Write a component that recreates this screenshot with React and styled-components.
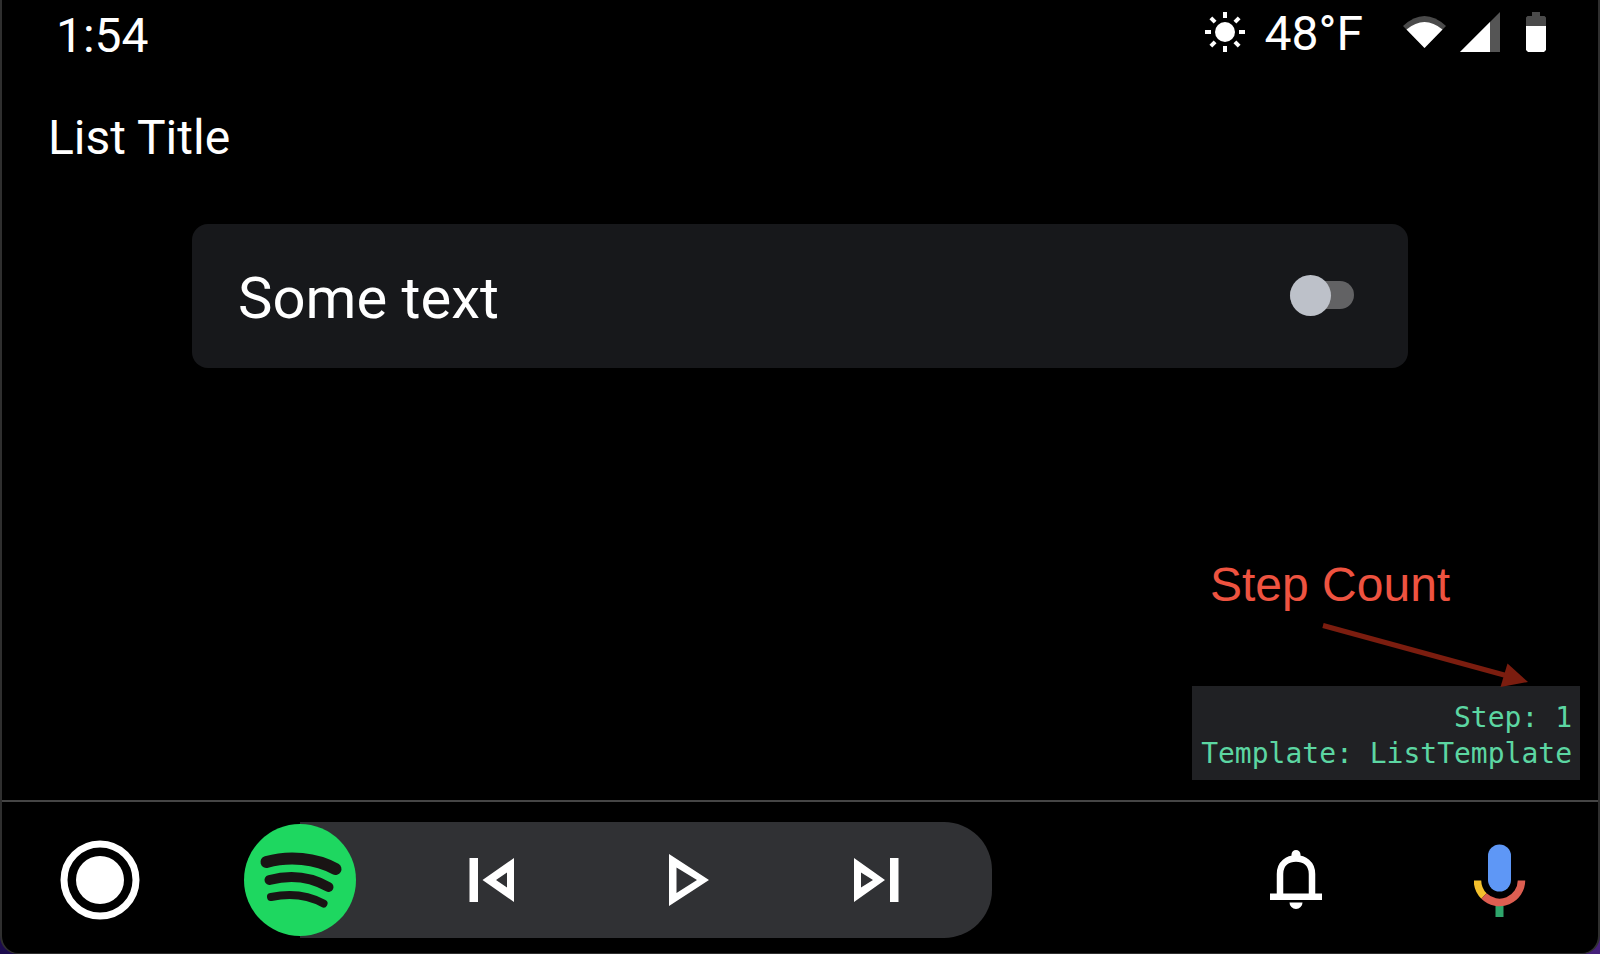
import { useState } from "react";
import styled, { createGlobalStyle } from "styled-components";

const App = () => {
    const [checked, setChecked] = useState(false);

    return (
        <>
            <GlobalStyle />
            <Screen>
                <StatusBar>
                    <Clock>1:54</Clock>
                    <StatusGroup>
                        <SunIcon />
                        <Temperature>48°F</Temperature>
                        <WifiIcon />
                        <SignalIcon />
                        <BatteryIcon />
                    </StatusGroup>
                </StatusBar>
                <Main>
                    <Title>List Title</Title>
                    <Row>
                        <RowLabel htmlFor="some-text">Some text</RowLabel>
                        <Toggle
                            id="some-text"
                            type="checkbox"
                            checked={checked}
                            onChange={(e) => setChecked(e.target.checked)}
                        />
                    </Row>
                    <Callout>
                        <CalloutText>Step Count</CalloutText>
                        <Arrow />
                        <DebugBox>
                            <DebugLine>Step: 1</DebugLine>
                            <DebugLine>Template: ListTemplate</DebugLine>
                        </DebugBox>
                    </Callout>
                </Main>
                <NavBar>
                    <IconButton aria-label="Home">
                        <svg width="80" height="80" viewBox="0 0 80 80">
                            <circle cx="40" cy="40" r="36" fill="none" stroke="#fff" strokeWidth="7" />
                            <circle cx="40" cy="40" r="24" fill="#fff" />
                        </svg>
                    </IconButton>
                    <Player>
                        <IconButton aria-label="Spotify">
                            <SpotifyLogo />
                        </IconButton>
                        <Controls>
                            <IconButton aria-label="Previous">
                                <ControlSvg viewBox="0 0 64 64">
                                    <path d="M9.500 10H18V54H9.500Z" />
                                    <path fillRule="evenodd" d="M54 10V54L22.500 32ZM47 24.500L36 32L47 39.500Z" />
                                </ControlSvg>
                            </IconButton>
                            <IconButton aria-label="Play">
                                <ControlSvg viewBox="0 0 64 64">
                                    <path fillRule="evenodd" d="M16 6V58L56 32ZM23.500 19.500L44 32L23.500 45Z" />
                                </ControlSvg>
                            </IconButton>
                            <IconButton aria-label="Next">
                                <ControlSvg viewBox="0 0 64 64">
                                    <path fillRule="evenodd" d="M9 10V54L40 32ZM16 24.500L28 32L16 39.500Z" />
                                    <path d="M45 10H53.500V54H45Z" />
                                </ControlSvg>
                            </IconButton>
                        </Controls>
                    </Player>
                    <Actions>
                        <IconButton aria-label="Notifications">
                            <BellIcon />
                        </IconButton>
                        <IconButton aria-label="Voice search">
                            <MicIcon />
                        </IconButton>
                    </Actions>
                </NavBar>
            </Screen>
        </>
    );
}

export default App;


const SunIcon = () => (
    <StatusSvg width="40" height="40" viewBox="0 0 40 40">
        <circle cx="20" cy="20" r="10" />
        {[0, 45, 90, 135, 180, 225, 270, 315].map((angle) => (
            <rect key={angle} x="18" y="0" width="4" height="6" transform={`rotate(${angle} 20 20)`} />
        ))}
    </StatusSvg>
)

const WifiIcon = () => (
    <WifiSvg width="43" height="40" viewBox="0 0 43 40">
        <path fill="#4a4a4a" d="M21.5 36L0 14Q21.500 -6 43 14Z" />
        <path d="M21.5 36L3.500 17.500Q21.500 2.500 39.500 17.500Z" />
    </WifiSvg>
)

const SignalIcon = () => (
    <SignalSvg width="40" height="40" viewBox="0 0 40 40">
        <path fill="#555" d="M0 40L40 0V40Z" />
        <path d="M0 40L30 10V40Z" />
    </SignalSvg>
)

const BatteryIcon = () => (
    <BatterySvg width="20" height="40" viewBox="0 0 20 40">
        <path fill="#4a4a4a" d="M6 0H14V4H18.500L20 5.500V14H0V5.500L1.500 4H6Z" />
        <path d="M0 14H20V38L18 40H2L0 38Z" />
    </BatterySvg>
)

const Arrow = () => (
    <ArrowSvg width="388" height="73" viewBox="0 0 388 73">
        <path d="M131 12.500L314 62.500" stroke="#7b1d0f" strokeWidth="5" />
        <path d="M315.500 50.500L336 69L308.500 74Z" fill="#7b1d0f" />
    </ArrowSvg>
)

const SpotifyLogo = () => (
    <svg width="112" height="112" viewBox="0 0 112 112">
        <circle cx="56" cy="56" r="56" fill="#1ed760" />
        <g fill="none" stroke="#191414" strokeLinecap="round">
            <path d="M22.500 38C45 31.500 72 34 91.500 45" strokeWidth="12" />
            <path d="M25.500 56C46 50.500 67 53 84.500 63" strokeWidth="10" />
            <path d="M27 73C46 69 64 71 79.500 79.500" strokeWidth="8" />
        </g>
    </svg>
)

const BellIcon = () => (
    <svg width="52" height="60" viewBox="0 0 52 60">
        <path d="M10 44V24C10 13 18 8.500 26 8.500S42 13 42 24V44" fill="none" stroke="#fff" strokeWidth="6.5" />
        <path d="M18 9L21.500 6V4.500a4.500 4.500 0 0 1 9 0V6L34 9Z" fill="#fff" />
        <path d="M0 43.500H52V50H0ZM19.500 52.500H32.500a6.500 6.500 0 0 1 -13 0Z" fill="#fff" />
    </svg>
)

const MicIcon = () => (
    <svg width="52" height="74" viewBox="0 0 52 74">
        <rect x="14" y="1.500" width="23" height="47" rx="11.500" fill="#5e97f6" />
        <rect x="21.500" y="61" width="8" height="13" fill="#2ea56b" />
        <g fill="none" strokeWidth="7.5">
            <path d="M3.500 37.500A22 22 0 0 0 10 53" stroke="#f4c02d" />
            <path d="M10 53A22 22 0 0 0 47.500 37.500" stroke="#dd5e51" />
        </g>
    </svg>
)


const GlobalStyle = createGlobalStyle `
    * {
        box-sizing: border-box;
    }

    body {
        margin: 0;
        background: linear-gradient(to right, #1c0b4d, #45207a);
        font-family: Roboto, sans-serif;
        color: #fff;
    }
`

const Screen = styled.div `
    display: flex;
    flex-direction: column;
    min-height: 100vh;
    background: #000;
    border: 2px solid #2f2f2f;
    border-top: 0;
    border-bottom-width: 1px;
    border-radius: 0 0 18px 18px;
`

const StatusBar = styled.header `
    display: flex;
    justify-content: space-between;
    align-items: flex-start;
    padding: 6px 52px 0 54px;
    font-size: 48px;
    line-height: 56px;
`

const Clock = styled.time `
    margin-top: 2px;
`

const StatusGroup = styled.div `
    display: flex;
    align-items: flex-start;
`

const Temperature = styled.span `
    margin: 0 40px 0 20px;
`

const StatusSvg = styled.svg `
    margin-top: 6px;
    fill: #fff;
`

const WifiSvg = styled(StatusSvg) `
    margin-right: 14px;
`

const SignalSvg = styled(StatusSvg) `
    margin-right: 26px;
`

const BatterySvg = styled(StatusSvg) `
    flex-shrink: 0;
`

const Main = styled.main `
    display: flex;
    flex-direction: column;
    flex: 1;
    padding-top: 46px;
`

const Title = styled.h1 `
    margin: 0 46px 58px;
    font-size: 48px;
    font-weight: 400;
    line-height: 56px;
`

const Row = styled.div `
    display: flex;
    justify-content: space-between;
    align-items: center;
    width: calc(100% - 92px);
    max-width: 1216px;
    min-height: 144px;
    margin: 0 auto;
    padding: 0 54px 2px 46px;
    border-radius: 16px;
    background: #17181b;
`

const RowLabel = styled.label `
    padding-top: 6px;
    font-size: 58px;
    line-height: 64px;
`

const Toggle = styled.input `
    appearance: none;
    display: flex;
    align-items: center;
    width: 64px;
    height: 28px;
    margin: 0;
    border-radius: 14px;
    background: #626264;
    cursor: pointer;

    &::before {
        content: "";
        width: 41px;
        height: 41px;
        flex-shrink: 0;
        border-radius: 50%;
        background: #bdc1c9;
    }

    &:checked {
        justify-content: flex-end;
        background: #41577d;
    }
`

const Callout = styled.aside `
    display: flex;
    flex-direction: column;
    align-self: flex-end;
    width: 388px;
    margin: auto 18px 20px 0;
`

const CalloutText = styled.span `
    padding-left: 18px;
    font-family: "Liberation Sans", sans-serif;
    font-size: 48px;
    line-height: 56px;
    color: #ee5340;
`

const ArrowSvg = styled.svg `
    position: relative;
    overflow: visible;
`

const DebugBox = styled.div `
    padding: 14px 8px 8px;
    background: #202124;
    text-align: right;
`

const DebugLine = styled.p `
    margin: 0;
    font-family: "DejaVu Sans Mono", monospace;
    font-size: 28px;
    line-height: 36px;
    color: #5cd6a2;
`

const NavBar = styled.footer `
    display: flex;
    align-items: center;
    padding: 20px 72px 15px 58px;
    border-top: 2px solid #454545;
`

const IconButton = styled.button `
    display: flex;
    flex-shrink: 0;
    padding: 0;
    border: 0;
    background: none;
    cursor: pointer;
`

const Player = styled.div `
    display: flex;
    align-items: center;
    flex: 0 1 748px;
    height: 116px;
    margin-left: 104px;
    border-radius: 0 48px 48px 0;
    background: linear-gradient(to right, transparent 56px, #303134 56px);
`

const Controls = styled.div `
    display: flex;
    justify-content: space-between;
    flex: 1;
    padding: 0 83px 0 104px;
`

const ControlSvg = styled.svg `
    width: 64px;
    height: 64px;
    fill: #fff;
`

const Actions = styled.div `
    display: flex;
    align-items: center;
    gap: 152px;
    margin-left: auto;
`
